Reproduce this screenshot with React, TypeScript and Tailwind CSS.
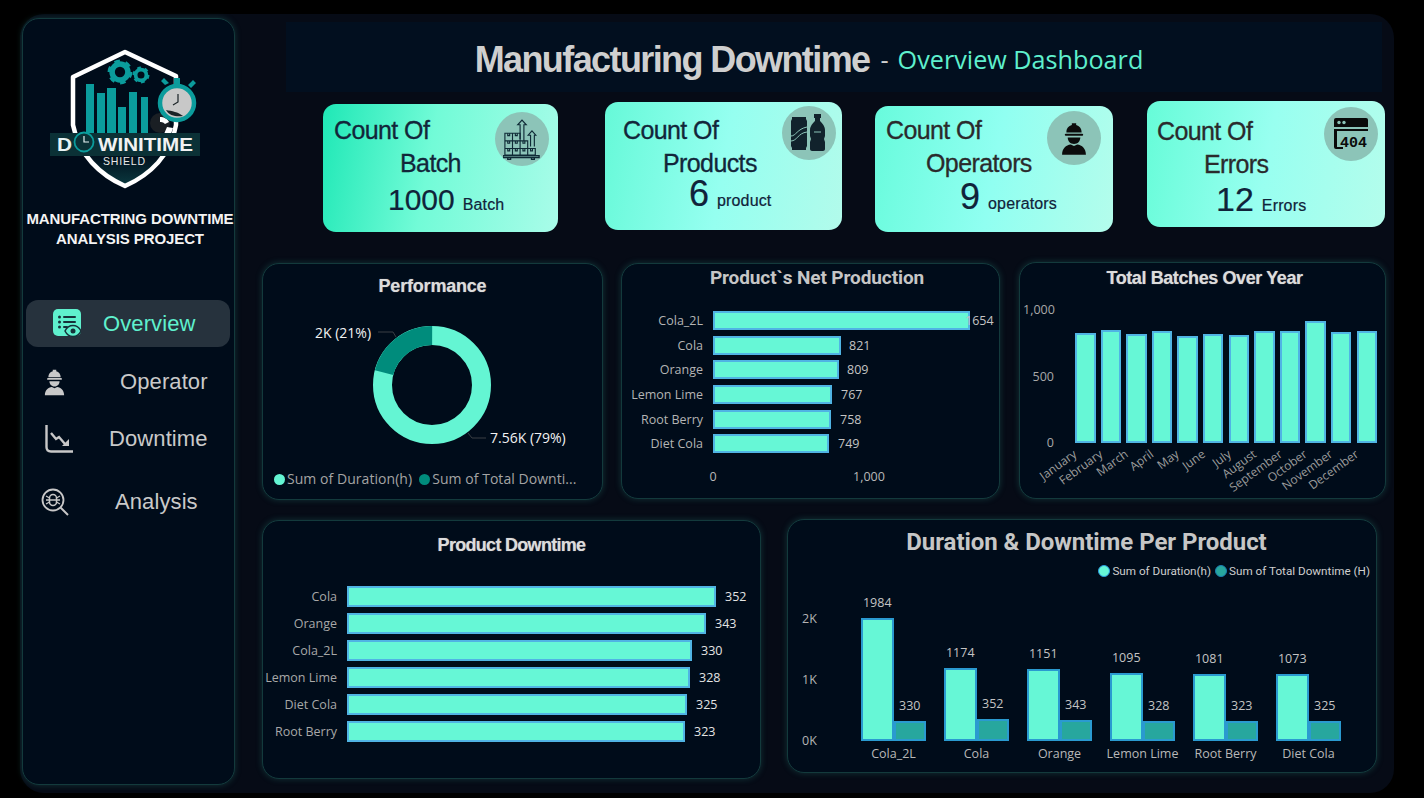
import React from "react";

const chart = "font-['Open_Sans',sans-serif]";
const arial = "font-['Liberation_Sans',Arial,sans-serif]";
const din = "font-['Roboto',sans-serif]";
const cardBox =
  "rounded-[17px] border border-[#133a3c] bg-[#000c1a] shadow-[0_0_6px_rgba(40,130,120,0.35)] shrink-0";

function Worker({ fill, className }: { fill: string; className?: string }) {
  return (
    <svg viewBox="0 0 24 30" className={className} fill={fill}>
      <path d="M10 1h4v1.600c3 .8 5 3.200 5 6.400v.5h-14V9c0-3.200 2-5.600 5-6.400V1z" />
      <rect x="3.500" y="10.500" width="17" height="2" rx="1" />
      <path d="M6.200 14h11.600c0 3.400-2.400 6-5.800 6s-5.800-2.600-5.800-6z" />
      <path d="M1 30c0-5.600 3.600-9 8-9.400l3 1.400 3-1.400c4.400.4 8 3.800 8 9.400H1z" />
    </svg>
  );
}

function BoxesIcon() {
  return (
    <svg viewBox="0 0 40 44" className="w-[38px] h-[42px]" fill="none" stroke="#0f2a36" strokeWidth="1.2">
      <path d="M2 24h8v8H2zM10 24h8v8h-8zM2 16h8v8H2zM10 16h8v8h-8zM2 32h8v7H2zM10 32h8v7h-8zM18 24h8v8h-8zM18 32h8v7h-8zM26 32h8v7h-8z" />
      <path d="M5 16v2.5h2V16M13 16v2.5h2V16M5 24v2.5h2V24M13 24v2.5h2V24M21 24v2.5h2V24M5 32v2.5h2V32M13 32v2.5h2V32M21 32v2.5h2V32M29 32v2.5h2V32" />
      <path d="M18 22V7h-2.500l4.500-5 4.500 5H22v17M29 30V18h-2.500l4-4.500 4 4.500H33v12" />
      <path d="M0 39.500h38v2H0zM5 41.500v2h3v-2M30 41.500v2h3v-2" strokeWidth="1.400" />
    </svg>
  );
}

function DrinksIcon() {
  return (
    <svg viewBox="0 0 40 40" className="w-[40px] h-[40px]">
      <path fill="#11222c" d="M3 4h14v2l1 2v25l-1 2v2H3v-2l-1-2V8l1-2V4z" />
      <path fill="none" stroke="#8cc4b8" strokeWidth="1" d="M2 23c5 0 6-7 16-9M2 28c6 0 7-8 16-9" />
      <path fill="#11222c" d="M25 1h7v4h-1v3c2 2 5 5 5 9v6l-1 3 1 3v7c0 1-1 2-2 2H23c-1 0-2-1-2-2v-7l1-3-1-3v-6c0-4 3-7 5-9V5h-1V1z" />
      <path stroke="#8cc4b8" strokeWidth="1" d="M25 19h7" />
    </svg>
  );
}

function ErrorIcon() {
  return (
    <svg viewBox="0 0 36 36" className="w-[36px] h-[36px]">
      <path fill="#0a0a0a" d="M3 2h30a2 2 0 0 1 2 2v7H1V4a2 2 0 0 1 2-2z" />
      <circle cx="6" cy="6.500" r="1.700" fill="#8cc4b8" />
      <circle cx="11" cy="6.500" r="1.700" fill="#8cc4b8" />
      <rect x="1" y="13" width="34" height="2" fill="#0a0a0a" />
      <path fill="#0a0a0a" d="M1 15h3v16h6v2H3a2 2 0 0 1-2-2V15z" />
      <text x="7" y="31" fontSize="14" fontWeight="700" fill="#0a0a0a" fontFamily="Liberation Mono, monospace" textLength="27" lengthAdjust="spacingAndGlyphs">404</text>
    </svg>
  );
}

function OverviewIcon() {
  return (
    <svg viewBox="0 0 28 29" className="w-[28px] h-[29px]">
      <rect x="0" y="0" width="28" height="27" rx="5" fill="#5ff0cd" />
      <g fill="#16323a">
        <circle cx="6.500" cy="8" r="1.500" />
        <circle cx="6.500" cy="13" r="1.500" />
        <circle cx="6.500" cy="18" r="1.500" />
        <rect x="10" y="7" width="13" height="2" rx="1" />
        <rect x="10" y="12" width="13" height="2" rx="1" />
        <rect x="10" y="17" width="5" height="2" rx="1" />
      </g>
      <path d="M12 22c2-4 5-5.500 8-5.500s6 1.500 8 5.500c-2 4-5 5.500-8 5.500s-6-1.500-8-5.500z" fill="#5ff0cd" stroke="#16323a" strokeWidth="1.500" />
      <circle cx="20" cy="22" r="2.500" fill="#16323a" />
    </svg>
  );
}

function DowntimeIcon() {
  return (
    <svg viewBox="0 0 28 28" className="w-[28px] h-[28px]" fill="none" stroke="#c8c8c8">
      <path d="M1.500 0v22c0 3 2 4.500 4.500 4.500h22" strokeWidth="2.400" />
      <path d="M6 8l5 6 3-2 6 7" strokeWidth="2.400" />
      <path d="M17 21h7v-7z" fill="#c8c8c8" stroke="none" />
    </svg>
  );
}

function AnalysisIcon() {
  return (
    <svg viewBox="0 0 28 28" className="w-[28px] h-[28px]" fill="none" stroke="#c8c8c8">
      <circle cx="12" cy="12" r="10.500" strokeWidth="1.800" />
      <path d="M19.500 19.500L27 27" strokeWidth="2" />
      <rect x="8.500" y="6.500" width="7" height="11" rx="3.500" strokeWidth="1.500" />
      <path d="M5 8l3.500 2M5 12h3.500M5 16l3.500-2M19 8l-3.500 2M19 12h-3.500M19 16l-3.500-2M8.500 12h7" strokeWidth="1.300" />
    </svg>
  );
}

function Logo() {
  const teal = "#0b9c9c";
  const bars = [
    [86, 84, 8],
    [97, 93, 8],
    [107, 88, 9],
    [118, 107, 8],
    [129, 92, 8],
    [141, 97, 7],
  ];
  const gear = (cx: number, cy: number, r: number) => (
    <g>
      <circle cx={cx} cy={cy} r={r * 0.72} fill="none" stroke={teal} strokeWidth={r * 0.5} />
      <circle cx={cx} cy={cy} r={r * 0.98} fill="none" stroke={teal} strokeWidth={r * 0.3} strokeDasharray={`${r * 0.5} ${r * 0.52}`} />
    </g>
  );
  return (
    <svg viewBox="50 46 152 146" className="w-[152px] h-[146px]">
      <defs>
        <linearGradient id="sh" x1="0" y1="0" x2="0" y2="1">
          <stop offset="0.75" stopColor="#000c1a" />
          <stop offset="1" stopColor="#0b3a40" />
        </linearGradient>
      </defs>
      <path d="M125 52 L176 76 V125 C171 155 150 175 125 186 C100 175 79 155 73 125 V77 Z" fill="url(#sh)" stroke="#ffffff" strokeWidth="4.500" strokeLinejoin="round" />
      {gear(120, 72, 11)}
      {gear(141, 75, 7.500)}
      {bars.map(([x, y, w]) => (
        <rect key={x} x={x} y={y} width={w} height={134 - y} fill={teal} />
      ))}
      <circle cx="160" cy="123" r="10" fill="#1a1f24" />
      <path d="M160 117c4 0 8 2 9 5l-4 2c-2-2-4-2-5-2zM167 127l6 1-2 6h-7z" fill="#ffffff" />
      <path d="M165 85l-4-4 3-3 5 5zM188 85l5-5 3 3-5 5z" fill={teal} />
      <rect x="174" y="78" width="6" height="7" fill={teal} />
      <circle cx="177" cy="103" r="17" fill="#c8c8c8" stroke={teal} strokeWidth="4.500" />
      <path d="M166 110c6 1 12 2 17 6-6 1-14 0-17-6z" fill="#1a2226" />
      <path d="M178 94v8l-5 3" stroke="#1a2226" strokeWidth="1.200" fill="none" />
      <rect x="50" y="133" width="150" height="23" fill="#0b3136" />
      <text x="57" y="151" fontSize="18" fontWeight="700" fill="#e8f4f4" fontFamily="Liberation Sans, sans-serif" textLength="15" lengthAdjust="spacingAndGlyphs">D</text>
      <circle cx="84" cy="142" r="9.500" fill="#0b3136" stroke={teal} strokeWidth="1.800" />
      <path d="M84 136v6h5" stroke="#e8f4f4" strokeWidth="1.200" fill="none" />
      <text x="98" y="151" fontSize="18" fontWeight="700" fill="#f2f2f2" fontFamily="Liberation Sans, sans-serif" textLength="95" lengthAdjust="spacingAndGlyphs">WINITIME</text>
      <text x="103" y="165" fontSize="10.500" fontWeight="400" fill="#e8e8e8" fontFamily="Liberation Sans, sans-serif" textLength="42">SHIELD</text>
    </svg>
  );
}

function Sidebar() {
  return (
    <aside className={`${cardBox} ml-[2px] mt-[4px] w-[213px] h-[767px] flex flex-col`}>
      <div className="flex justify-start mt-[27px] ml-[27px]">
        <Logo />
      </div>
      <div className={`${arial} mt-[17px] pl-[3px] text-center text-[15px] leading-[20px] font-bold tracking-[-0.1px] text-[#f4f4f4] whitespace-nowrap`}>
        MANUFACTRING DOWNTIME
        <br />
        ANALYSIS PROJECT
      </div>
      <nav className={`${arial} mt-[51px] flex flex-col text-[22px] leading-[26px] text-[#c9c9c9] tracking-[0.1px]`}>
        <div className="ml-[3px] w-[204px] h-[47px] rounded-[12px] bg-[#26323d] flex items-center text-[#5ff0cd]">
          <span className="ml-[27px]">
            <OverviewIcon />
          </span>
          <span className="ml-[22px]">Overview</span>
        </div>
        <div className="mt-[20px] h-[30px] flex items-center">
          <Worker fill="#c9c9c9" className="ml-[21px] w-[21px] h-[28px]" />
          <span className="ml-[55px]">Operator</span>
        </div>
        <div className="mt-[27px] h-[30px] flex items-center">
          <span className="ml-[22px]">
            <DowntimeIcon />
          </span>
          <span className="ml-[36px]">Downtime</span>
        </div>
        <div className="mt-[33px] h-[30px] flex items-center">
          <span className="ml-[18px]">
            <AnalysisIcon />
          </span>
          <span className="ml-[46px]">Analysis</span>
        </div>
      </nav>
    </aside>
  );
}

type Kpi = {
  box: string;
  gradient: string;
  line2: string;
  line2Ml: string;
  value: string;
  unit: string;
  valueBox: string;
  valueSize: string;
  titleColor: string;
  circle: string;
  icon: React.ReactNode;
};

const kpis: Kpi[] = [
  {
    box: "w-[235px] h-[128px] mt-[3px] pl-[11px] pt-[10px]",
    gradient: "bg-[linear-gradient(100deg,#1fe8b6_0%,#72fbd7_45%,#a9fce9_100%)]",
    line2: "Batch",
    line2Ml: "ml-[66px]",
    value: "1000",
    unit: "Batch",
    valueBox: "ml-[54px] mt-[1px]",
    valueSize: "text-[30px]",
    titleColor: "text-[#12263a]",
    circle: "left-[172px] top-[8px]",
    icon: <BoxesIcon />,
  },
  {
    box: "w-[237px] h-[128px] ml-[47px] mt-[1px] pl-[18px] pt-[12px]",
    gradient: "bg-[linear-gradient(100deg,#66f9d8_0%,#95fff0_50%,#b2fbeb_100%)]",
    line2: "Products",
    line2Ml: "ml-[40px]",
    value: "6",
    unit: "product",
    valueBox: "ml-[66px] -mt-[5px]",
    valueSize: "text-[36px]",
    titleColor: "text-[#12263a]",
    circle: "left-[177px] top-[4px]",
    icon: <DrinksIcon />,
  },
  {
    box: "w-[238px] h-[126px] ml-[33px] mt-[5px] pl-[11px] pt-[8px]",
    gradient: "bg-[linear-gradient(100deg,#68fbdc_0%,#90fff1_50%,#b4fdec_100%)]",
    line2: "Operators",
    line2Ml: "ml-[40px]",
    value: "9",
    unit: "operators",
    valueBox: "ml-[74px] -mt-[2px]",
    valueSize: "text-[36px]",
    titleColor: "text-[#2a2a2c]",
    circle: "left-[172px] top-[5px]",
    icon: <Worker fill="#0c0c0c" className="w-[26px] h-[33px]" />,
  },
  {
    box: "w-[238px] h-[126px] ml-[34px] pl-[10px] pt-[14px]",
    gradient: "bg-[linear-gradient(100deg,#66fcd8_0%,#98fff0_50%,#b4fdec_100%)]",
    line2: "Errors",
    line2Ml: "ml-[47px]",
    value: "12",
    unit: "Errors",
    valueBox: "ml-[59px] -mt-[1px]",
    valueSize: "text-[34px]",
    titleColor: "text-[#2a2a2c]",
    circle: "left-[177px] top-[6px]",
    icon: <ErrorIcon />,
  },
];

function KpiCard({ k }: { k: Kpi }) {
  const title = `${k.titleColor} text-[25px] leading-[33px] tracking-[-0.6px] [-webkit-text-stroke:0.3px_currentColor]`;
  return (
    <div className={`${k.box} ${k.gradient} ${arial} relative shrink-0 rounded-[13px]`}>
      <div className={title}>Count Of</div>
      <div className={`${title} ${k.line2Ml}`}>{k.line2}</div>
      <div className={`${k.valueBox} flex items-baseline text-[#10233a] leading-[38px] [-webkit-text-stroke:0.2px_currentColor]`}>
        <span className={k.valueSize}>{k.value}</span>
        <span className="ml-[8px] text-[16px] tracking-[0.15px]">{k.unit}</span>
      </div>
      <div className={`${k.circle} absolute w-[54px] h-[54px] rounded-full bg-[#8cc4b8] flex items-center justify-center`}>
        {k.icon}
      </div>
    </div>
  );
}

function Performance() {
  return (
    <div className={`${cardBox} w-[341px] h-[237px] mt-[1px]`}>
      <div className={`${arial} h-[44px] flex items-center justify-center text-[18px] font-bold tracking-[-0.2px] text-[#dcdcdc] [text-shadow:0_0_1px_#888]`}>
        Performance
      </div>
      <svg viewBox="0 0 339 158" className="w-[339px] h-[158px]">
        <circle cx="169" cy="77" r="49.500" fill="none" stroke="#64f5d3" strokeWidth="19" />
        <circle cx="169" cy="77" r="49.500" fill="none" stroke="#008c7c" strokeWidth="19" strokeDasharray="65.300 311" transform="rotate(-165.600 169 77)" />
        <path d="M115 24h15l3 5M205 125l4 5h14" fill="none" stroke="#3a3f44" strokeWidth="1" />
        <text x="52" y="30" fontSize="14" fill="#f2f2f2" fontFamily="Open Sans, sans-serif">2K (21%)</text>
        <text x="227" y="135" fontSize="14" fill="#f2f2f2" fontFamily="Open Sans, sans-serif">7.56K (79%)</text>
      </svg>
      <div className={`${chart} mt-[3px] pl-[11px] flex items-center text-[14px] leading-[20px] text-[#a4a4a4] tracking-[0.05px] whitespace-nowrap`}>
        <span className="w-[11px] h-[11px] rounded-full bg-[#64f5d3]" />
        <span className="ml-[2px]">Sum of Duration(h)</span>
        <span className="ml-[7px] w-[11px] h-[11px] rounded-full bg-[#008c7c]" />
        <span className="ml-[2px]">Sum of Total Downti...</span>
      </div>
    </div>
  );
}

type Row = { name: string; w: number; value: string; gap: number };

const netRows: Row[] = [
  { name: "Cola_2L", w: 257, value: "1654", gap: -5 },
  { name: "Cola", w: 128, value: "821", gap: 8 },
  { name: "Orange", w: 126, value: "809", gap: 8 },
  { name: "Lemon Lime", w: 119, value: "767", gap: 9 },
  { name: "Root Berry", w: 118, value: "758", gap: 9 },
  { name: "Diet Cola", w: 116, value: "749", gap: 9 },
];

const downRows: Row[] = [
  { name: "Cola", w: 369, value: "352", gap: 9 },
  { name: "Orange", w: 359, value: "343", gap: 9 },
  { name: "Cola_2L", w: 345, value: "330", gap: 9 },
  { name: "Lemon Lime", w: 343, value: "328", gap: 9 },
  { name: "Diet Cola", w: 340, value: "325", gap: 9 },
  { name: "Root Berry", w: 338, value: "323", gap: 9 },
];

function NetProduction() {
  return (
    <div className={`${cardBox} w-[379px] h-[236px] mt-[1px]`}>
      <div className={`${din} h-[28px] flex items-center justify-center pl-[13px] text-[19px] font-bold tracking-[-0.1px] text-[#c6c6c6]`}>
        Product`s Net Production
      </div>
      <div className={`${chart} mt-[19px] flex flex-col gap-[5.700px] text-[12.500px] leading-[19px]`}>
        {netRows.map((r) => (
          <div key={r.name} className="flex items-center h-[19px]">
            <span className="w-[81px] text-right text-[#b4b4b4] whitespace-nowrap">{r.name}</span>
            <div className="ml-[10px] h-[19px] bg-[#66f7d6] border-2 border-[#50b4e4]" style={{ width: r.w }} />
            <span className="text-[#c4c4c4]" style={{ marginLeft: r.gap }}>{r.value}</span>
          </div>
        ))}
      </div>
      <div className={`${chart} mt-[15px] flex text-[12.500px] leading-[18px] text-[#b8b8b8]`}>
        <span className="ml-[83px] w-[16px] text-center">0</span>
        <span className="ml-[132px]">1,000</span>
      </div>
    </div>
  );
}

const months: [string, number][] = [
  ["January", 110],
  ["February", 113],
  ["March", 109],
  ["April", 112],
  ["May", 107],
  ["June", 109],
  ["July", 108],
  ["August", 112],
  ["September", 112],
  ["October", 122],
  ["November", 111],
  ["December", 112],
];

function TotalBatches() {
  return (
    <div className={`${cardBox} w-[367px] h-[237px] ml-[1px]`}>
      <div className={`${arial} h-[30px] flex items-center justify-center pl-[4px] text-[18px] font-bold tracking-[-0.4px] text-[#dcdcdc] [text-shadow:0_0_1px_#888]`}>
        Total Batches Over Year
      </div>
      <div className={`${chart} flex items-end text-[12.500px] text-[#a8a8a8]`}>
        <div className="ml-[3px] w-[31px] h-[149px] -mb-[8px] flex flex-col justify-between text-right leading-[16px]">
          <span>1,000</span>
          <span>500</span>
          <span>0</span>
        </div>
        <div className="ml-[21px] h-[150px] flex items-end gap-[5.100px]">
          {months.map(([m, h]) => (
            <div key={m} className="w-[20.500px] bg-[#66f7d6] border-2 border-[#50b4e4]" style={{ height: h }} />
          ))}
        </div>
      </div>
      <div className={`${chart} ml-[26px] flex text-[12px] leading-[14px] text-[#9c9c9c]`}>
        {months.map(([m]) => (
          <div key={m} className="w-[25.600px] h-[40px] shrink-0 flex justify-end pt-[4px]">
            <span className="shrink-0 whitespace-nowrap origin-top-right rotate-[-36deg]">{m}</span>
          </div>
        ))}
      </div>
    </div>
  );
}

function ProductDowntime() {
  return (
    <div className={`${cardBox} w-[499px] h-[259px] mt-[1px]`}>
      <div className={`${arial} h-[49px] flex items-center justify-center text-[18px] font-bold tracking-[-0.7px] text-[#dcdcdc] [text-shadow:0_0_1px_#888]`}>
        Product Downtime
      </div>
      <div className={`${chart} mt-[16px] flex flex-col gap-[6px] text-[12.500px] leading-[21px]`}>
        {downRows.map((r) => (
          <div key={r.name} className="flex items-center h-[21px]">
            <span className="w-[74px] text-right text-[#a8a8a8] whitespace-nowrap">{r.name}</span>
            <div className="ml-[10px] h-[21px] bg-[#66f7d6] border-2 border-[#50b4e4]" style={{ width: r.w }} />
            <span className="text-[#e4e4e4]" style={{ marginLeft: r.gap }}>{r.value}</span>
          </div>
        ))}
      </div>
    </div>
  );
}

const groups: [string, number, number, number, number][] = [
  ["Cola_2L", 123, 20, 1984, 330],
  ["Cola", 73, 22, 1174, 352],
  ["Orange", 72, 21, 1151, 343],
  ["Lemon Lime", 68, 20, 1095, 328],
  ["Root Berry", 67, 20, 1081, 323],
  ["Diet Cola", 67, 20, 1073, 325],
];

function Column({ h, value, fill }: { h: number; value: number; fill: string }) {
  return (
    <div className="w-[33px] flex flex-col items-center">
      <span className="mb-[7px] leading-[16px] text-[#c4c4c4]">{value}</span>
      <div className={`${fill} w-full border-2 border-[#2a9ad0]`} style={{ height: h }} />
    </div>
  );
}

function DurationChart() {
  return (
    <div className={`${cardBox} w-[590px] h-[254px] ml-[26px]`}>
      <div className={`${din} h-[44px] flex items-center justify-center pl-[9px] text-[24px] font-bold tracking-[-0.05px] text-[#c6c6c6]`}>
        Duration &amp; Downtime Per Product
      </div>
      <div className={`${din} h-[14px] flex items-center justify-end pr-[6px] text-[11.700px] leading-[14px] text-[#cfcfcf] whitespace-nowrap`}>
        <span className="w-[12px] h-[12px] rounded-full bg-[#66f7d6] border border-[#2a9ce0]" />
        <span className="ml-[2px]">Sum of Duration(h)</span>
        <span className="ml-[4px] w-[12px] h-[12px] rounded-full bg-[#27a79e] border border-[#1a7fb0]" />
        <span className="ml-[2px]">Sum of Total Downtime (H)</span>
      </div>
      <div className={`${chart} h-[163px] flex items-end text-[12.500px]`}>
        <div className="ml-[14px] w-[20px] h-[138px] -mb-[8px] flex flex-col justify-between leading-[16px] text-[#b4b4b4]">
          <span>2K</span>
          <span>1K</span>
          <span>0K</span>
        </div>
        <div className="ml-[39px] flex items-end gap-[18px]">
          {groups.map(([n, a, b, va, vb]) => (
            <div key={n} className="flex items-end w-[65px]">
              <Column h={a} value={va} fill="bg-[#66f7d6]" />
              <Column h={b} value={vb} fill="bg-[#27a79e]" />
            </div>
          ))}
        </div>
      </div>
      <div className={`${chart} ml-[73px] mt-[4px] flex gap-[18px] text-[12.500px] leading-[18px] text-[#b8b8b8]`}>
        {groups.map(([n]) => (
          <div key={n} className="w-[65px] flex justify-center whitespace-nowrap">
            {n}
          </div>
        ))}
      </div>
    </div>
  );
}

export default function App() {
  return (
    <div className="w-full h-[798px] bg-black overflow-hidden pl-[20px] pt-[14px]">
      <div className="w-[1374px] h-[779px] rounded-[24px] bg-[#060b16] flex">
        <Sidebar />
        <main className="flex flex-col">
          <header className="ml-[51px] mt-[8px] w-[1096px] h-[70px] bg-[#020f1f] flex items-center justify-center pr-[50px] pt-[6px] whitespace-nowrap">
            <span className={`${arial} text-[36px] font-bold tracking-[-1.600px] text-[#cfcfcf]`}>Manufacturing Downtime</span>
            <span className={`${chart} ml-[11px] text-[25.200px] text-[#5ff0cd]`}>
              <span className="text-[#cfcfcf]">-</span>
              <span className="ml-[9px]">Overview Dashboard</span>
            </span>
          </header>
          <section className="ml-[88px] mt-[9px] flex items-start">
            {kpis.map((k) => (
              <KpiCard key={k.line2} k={k} />
            ))}
          </section>
          <section className="ml-[27px] mt-[30px] flex items-start gap-[18px]">
            <Performance />
            <NetProduction />
            <TotalBatches />
          </section>
          <section className="ml-[27px] mt-[19px] flex items-start">
            <ProductDowntime />
            <DurationChart />
          </section>
        </main>
      </div>
    </div>
  );
}
